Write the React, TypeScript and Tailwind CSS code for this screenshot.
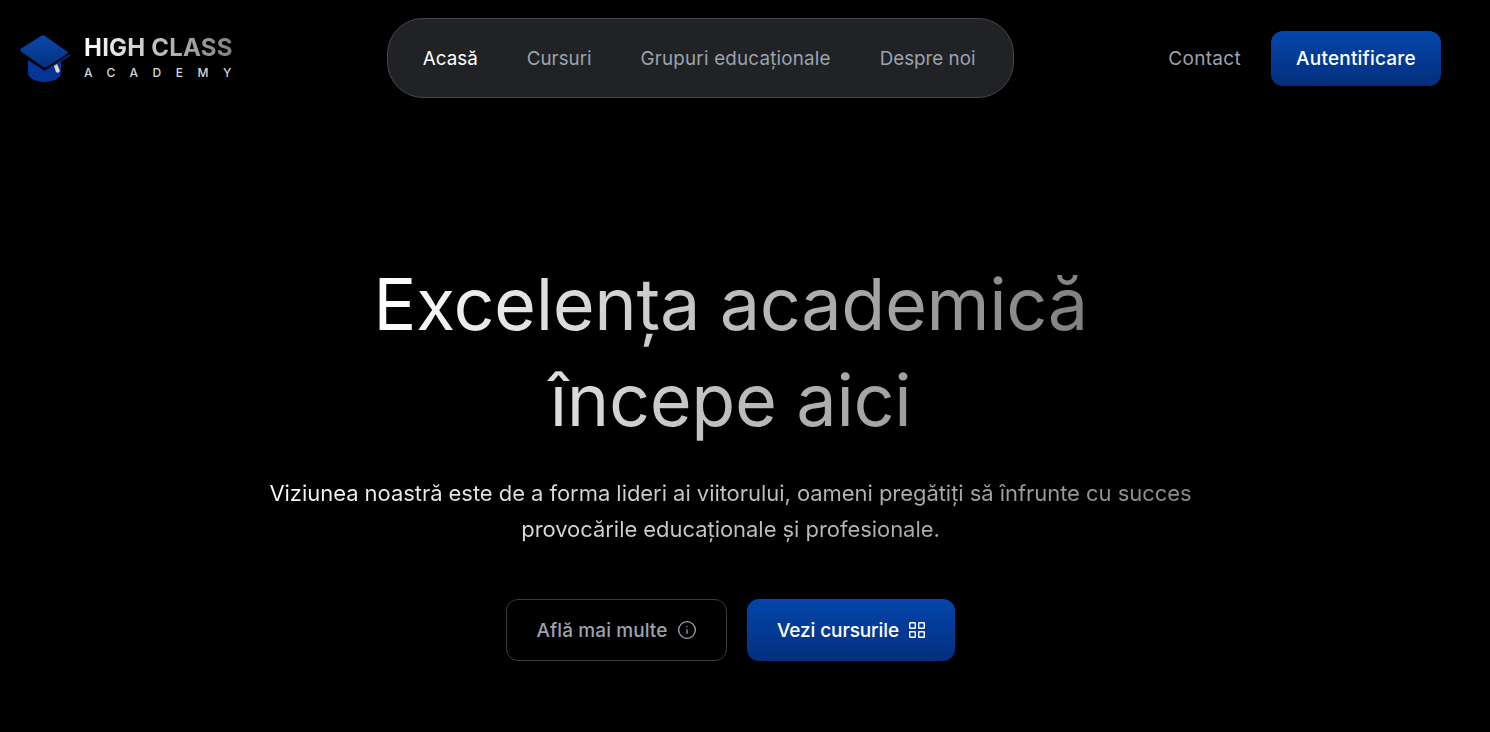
import { Info } from 'lucide-react';

const font = { fontFamily: 'Inter, sans-serif' };

function Logo() {
  return (
    <div className="flex items-center gap-[14px] w-[212px]">
      <svg width="50" height="47" viewBox="0 0 50 47" className="shrink-0">
        <defs>
          <linearGradient id="cap" x1="0" y1="0" x2="0" y2="1">
            <stop offset="0" stopColor="#0b49ab" />
            <stop offset="1" stopColor="#03307f" />
          </linearGradient>
        </defs>
        <path d="M8 25 L25 36 L41 26 V38 C41 43 33 47 24.5 47 C16 47 8 43 8 38 Z" fill="#03359a" />
        <path d="M22 0.6 Q23 0 24.5 0.8 L47 16.5 Q48.5 18 47 19 L27 32 Q25 33.5 23 32 L1 16.5 Q-0.5 15 1 13.5 Z" fill="url(#cap)" />
        <path d="M25 36 L50 20" stroke="#0a2f78" strokeWidth="1.6" />
        <path d="M34 31 L37 29 L40 36 L38 38 L36 37 Z" fill="#e8d9b0" />
      </svg>
      <div className="flex flex-col -mt-[1px]">
        <span className="text-[24px] leading-[26px] font-bold tracking-[0.2px] whitespace-nowrap bg-gradient-to-r from-white to-[#777777] bg-clip-text text-transparent">HIGH CLASS</span>
        <span className="text-[12px] leading-[14px] mt-[5px] font-medium text-[#d8d8d8] tracking-[14.5px] whitespace-nowrap">ACADEMY</span>
      </div>
    </div>
  );
}

function GridIcon() {
  return (
    <svg width="16" height="16" viewBox="0 0 16 16" fill="none" stroke="currentColor" strokeWidth="1.4" className="shrink-0">
      <rect x="0.7" y="0.7" width="5.6" height="5.6" rx="0.6" />
      <rect x="9.7" y="0.7" width="5.6" height="5.6" rx="0.6" />
      <rect x="0.7" y="9.7" width="5.6" height="5.6" rx="0.6" />
      <rect x="9.7" y="9.7" width="5.6" height="5.6" rx="0.6" />
    </svg>
  );
}

export default function App() {
  return (
    <div className="min-h-screen bg-black overflow-hidden" style={font}>
      <div className="w-[1461px]">
        {/* Header */}
        <header className="flex items-center justify-between pl-5 pr-5 pt-[18px]">
          <Logo />
          <nav className="flex items-center gap-[49px] h-[80px] pl-[35px] pr-[37px] pt-[2px] rounded-[36px] bg-[#202225] border border-[#45474a] text-[18.8px] text-[#9ca3af]">
            <a className="text-white">Acasă</a>
            <a>Cursuri</a>
            <a className="tracking-[0.2px]">Grupuri educaționale</a>
            <a>Despre noi</a>
          </nav>
          <div className="flex items-center gap-[30px] text-[19px]">
            <a className="text-[#9ca3af] tracking-[0.3px] pt-[2px]">Contact</a>
            <button className="h-[55px] w-[170px] pt-[2px] rounded-xl bg-gradient-to-b from-[#0446ab] to-[#032f7e] text-white font-medium tracking-[0.2px]">Autentificare</button>
          </div>
        </header>

        {/* Hero */}
        <main className="flex flex-col items-center pt-[158px]">
          <h1 className="text-[72px] leading-[96px] font-normal text-center tracking-[-0.4px] bg-gradient-to-r from-white to-[#808080] bg-clip-text text-transparent">
            Excelența academică<br />începe aici
          </h1>
          <p className="mt-[27px] w-[930px] text-[22px] leading-[36px] text-center bg-gradient-to-r from-white to-[#8a8a8a] bg-clip-text text-transparent tracking-[-0.05px]">
            Viziunea noastră este de a forma lideri ai viitorului, oameni pregătiți să înfrunte cu succes provocările educaționale și profesionale.
          </p>
          <div className="flex items-center gap-5 mt-[52px] text-[19px]">
            <button className="flex items-center justify-center gap-[9px] w-[221px] h-[62px] rounded-xl border border-[#3a3a3c] text-[#9ca3af] font-medium tracking-[0.1px]">
              <span className="pt-[2px]">Află mai multe</span>
              <Info className="w-5 h-5" strokeWidth={1.6} />
            </button>
            <button className="flex items-center justify-center gap-[10px] w-[208px] h-[62px] rounded-xl bg-gradient-to-b from-[#0446ab] to-[#032f7e] text-white font-medium tracking-[-0.1px]">
              <span className="pt-[2px]">Vezi cursurile</span>
              <GridIcon />
            </button>
          </div>
        </main>
      </div>
    </div>
  );
}
